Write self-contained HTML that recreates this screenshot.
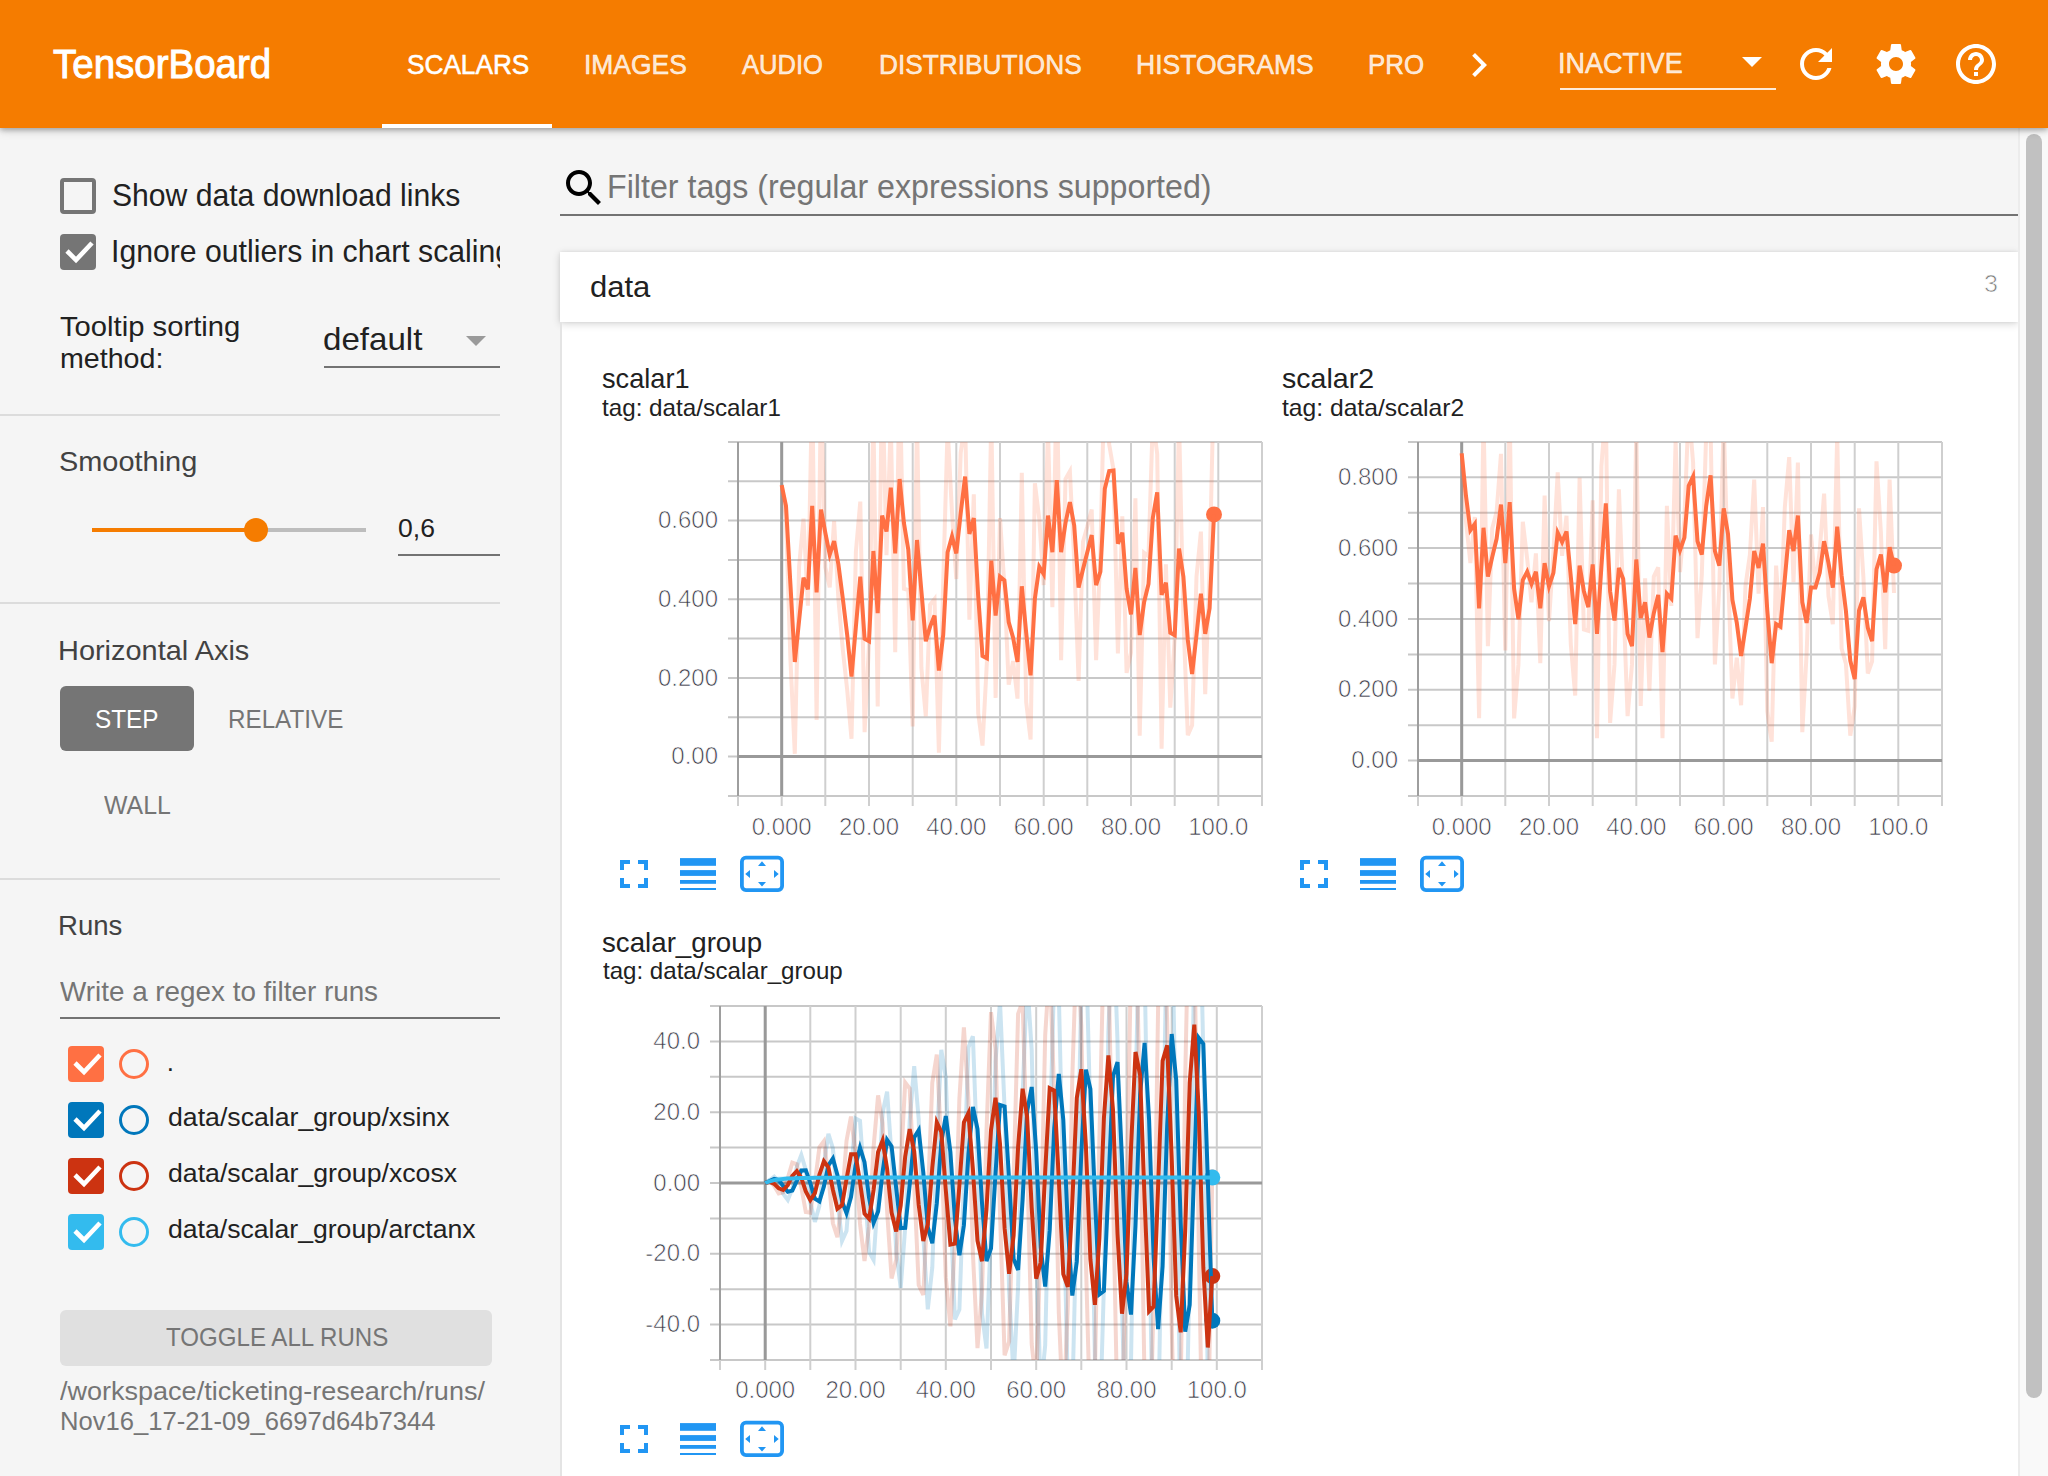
<!DOCTYPE html>
<html><head><meta charset="utf-8"><title>TensorBoard</title>
<style>
html,body{margin:0;padding:0;}
body{width:2048px;height:1476px;overflow:hidden;position:relative;background:#f5f5f5;font-family:"Liberation Sans",sans-serif;}
.t{position:absolute;white-space:nowrap;line-height:1;transform-origin:0 0;}
.abs{position:absolute;}
svg{position:absolute;overflow:visible;}
</style></head><body>
<div class="abs" style="left:0;top:128px;width:560px;height:1348px;background:#f5f5f5"></div>
<div class="abs" style="left:560px;top:322px;width:1458px;height:1200px;background:#fff"></div>
<div class="abs" style="left:560px;top:252px;width:1458px;height:70px;background:#fff;box-shadow:0 2px 8px rgba(0,0,0,0.16),0 0 3px rgba(0,0,0,0.08)"></div>
<div class="abs" style="left:560px;top:322px;width:2px;height:1160px;background:#e4e4e4"></div>
<div class="abs" style="left:2018px;top:128px;width:30px;height:1348px;background:#f9f9f9;border-left:2px solid #ececec;box-sizing:border-box"></div>
<div class="abs" style="left:2026px;top:134px;width:16px;height:1264px;background:#c1c1c1;border-radius:8px"></div>
<div class="abs" style="left:60px;top:178px;width:36px;height:36px;box-sizing:border-box;border:4px solid #757575;border-radius:4px"></div>
<div class="t" style="left:111.59px;top:178.91px;font-size:32px;color:#212121;transform:scaleX(0.9415);">Show data download links</div>
<div class="abs" style="left:60px;top:234px;width:36px;height:36px;background:#757575;border-radius:4px"></div>
<svg style="left:60px;top:234px" width="36" height="36"><polyline points="7,17 16,26 32,9" fill="none" stroke="#fff" stroke-width="4.6"/></svg>
<div class="abs" style="left:0;top:220px;width:500px;height:60px;overflow:hidden"><div class="t" style="left:111.47px;top:14.91px;font-size:32px;color:#212121;transform:scaleX(0.9435);">Ignore outliers in chart scaling</div></div>
<div class="t" style="left:59.98px;top:312.60px;font-size:28px;color:#212121;transform:scaleX(1.0434);">Tooltip sorting</div>
<div class="t" style="left:60.11px;top:344.60px;font-size:28px;color:#212121;transform:scaleX(1.0216);">method:</div>
<div class="t" style="left:322.71px;top:322.91px;font-size:32px;color:#212121;transform:scaleX(1.0343);">default</div>
<svg style="left:466px;top:336px" width="20" height="11"><path d="M0 0 L20 0 L10 10z" fill="#9a9a9a"/></svg>
<div class="abs" style="left:324px;top:366px;width:176px;height:2px;background:#737373"></div>
<div class="abs" style="left:0;top:414px;width:500px;height:2px;background:#dcdcdc"></div>
<div class="t" style="left:58.71px;top:448.30px;font-size:28px;color:#424242;transform:scaleX(1.0325);">Smoothing</div>
<div class="abs" style="left:92px;top:527.5px;width:164px;height:4px;background:#f57c00"></div>
<div class="abs" style="left:256px;top:527.5px;width:110px;height:4px;background:#bdbdbd"></div>
<div class="abs" style="left:244px;top:517.5px;width:24px;height:24px;border-radius:12px;background:#f57c00"></div>
<div class="t" style="left:397.98px;top:515.39px;font-size:26px;color:#212121;transform:scaleX(1.0219);">0,6</div>
<div class="abs" style="left:398px;top:554px;width:102px;height:2px;background:#737373"></div>
<div class="abs" style="left:0;top:602px;width:500px;height:2px;background:#dcdcdc"></div>
<div class="t" style="left:57.68px;top:636.80px;font-size:28px;color:#424242;transform:scaleX(1.0330);">Horizontal Axis</div>
<div class="abs" style="left:60px;top:686px;width:134px;height:65px;background:#757575;border-radius:6px"></div>
<div class="t" style="left:94.83px;top:705.99px;font-size:26px;color:#ffffff;transform:scaleX(0.9349);">STEP</div>
<div class="t" style="left:227.64px;top:705.99px;font-size:26px;color:#757575;transform:scaleX(0.9317);">RELATIVE</div>
<div class="t" style="left:103.70px;top:791.99px;font-size:26px;color:#757575;transform:scaleX(0.9574);">WALL</div>
<div class="abs" style="left:0;top:878px;width:500px;height:2px;background:#dcdcdc"></div>
<div class="t" style="left:57.79px;top:912.30px;font-size:28px;color:#424242;transform:scaleX(0.9839);">Runs</div>
<div class="t" style="left:60.00px;top:978.30px;font-size:28px;color:#757575;transform:scaleX(0.9937);">Write a regex to filter runs</div>
<div class="abs" style="left:60px;top:1017px;width:440px;height:2px;background:#737373"></div>
<div class="abs" style="left:68px;top:1046px;width:36px;height:36px;background:#ff7043;border-radius:4px"></div>
<svg style="left:68px;top:1046px" width="36" height="36"><polyline points="7,17 16,26 32,9" fill="none" stroke="#fff" stroke-width="4.6"/></svg>
<div class="abs" style="left:119px;top:1049px;width:30px;height:30px;box-sizing:border-box;border:3px solid #ff7043;border-radius:50%"></div>
<div class="t" style="left:166.75px;top:1048.99px;font-size:26px;color:#212121;">.</div>
<div class="abs" style="left:68px;top:1102px;width:36px;height:36px;background:#0077bb;border-radius:4px"></div>
<svg style="left:68px;top:1102px" width="36" height="36"><polyline points="7,17 16,26 32,9" fill="none" stroke="#fff" stroke-width="4.6"/></svg>
<div class="abs" style="left:119px;top:1105px;width:30px;height:30px;box-sizing:border-box;border:3px solid #0077bb;border-radius:50%"></div>
<div class="t" style="left:167.57px;top:1103.99px;font-size:26px;color:#212121;transform:scaleX(1.0254);">data/scalar_group/xsinx</div>
<div class="abs" style="left:68px;top:1158px;width:36px;height:36px;background:#cc3311;border-radius:4px"></div>
<svg style="left:68px;top:1158px" width="36" height="36"><polyline points="7,17 16,26 32,9" fill="none" stroke="#fff" stroke-width="4.6"/></svg>
<div class="abs" style="left:119px;top:1161px;width:30px;height:30px;box-sizing:border-box;border:3px solid #cc3311;border-radius:50%"></div>
<div class="t" style="left:167.57px;top:1159.99px;font-size:26px;color:#212121;transform:scaleX(1.0257);">data/scalar_group/xcosx</div>
<div class="abs" style="left:68px;top:1214px;width:36px;height:36px;background:#33bbee;border-radius:4px"></div>
<svg style="left:68px;top:1214px" width="36" height="36"><polyline points="7,17 16,26 32,9" fill="none" stroke="#fff" stroke-width="4.6"/></svg>
<div class="abs" style="left:119px;top:1217px;width:30px;height:30px;box-sizing:border-box;border:3px solid #33bbee;border-radius:50%"></div>
<div class="t" style="left:167.58px;top:1215.99px;font-size:26px;color:#212121;transform:scaleX(1.0234);">data/scalar_group/arctanx</div>
<div class="abs" style="left:60px;top:1310px;width:432px;height:56px;background:#e0e0e0;border-radius:6px"></div>
<div class="t" style="left:165.54px;top:1324.39px;font-size:26px;color:#757575;transform:scaleX(0.9268);">TOGGLE ALL RUNS</div>
<div class="t" style="left:60.00px;top:1377.99px;font-size:26px;color:#757575;transform:scaleX(1.0391);">/workspace/ticketing-research/runs/</div>
<div class="t" style="left:60.33px;top:1407.99px;font-size:26px;color:#757575;transform:scaleX(0.9839);">Nov16_17-21-09_6697d64b7344</div>
<svg style="left:560px;top:164px" width="48" height="48" viewBox="0 0 24 24"><path fill="#000" d="M15.5 14h-.79l-.28-.27C15.41 12.59 16 11.11 16 9.5 16 5.91 13.09 3 9.5 3S3 5.91 3 9.5 5.91 16 9.5 16c1.61 0 3.09-.59 4.23-1.57l.27.28v.79l5 4.99L20.49 19l-4.99-5zm-6 0C7.01 14 5 11.99 5 9.5S7.01 5 9.5 5 14 7.01 14 9.5 11.99 14 9.5 14z"/></svg>
<div class="t" style="left:607.32px;top:170.37px;font-size:33px;color:#757575;transform:scaleX(0.9752);">Filter tags (regular expressions supported)</div>
<div class="abs" style="left:560px;top:214px;width:1458px;height:2px;background:#737373"></div>
<div class="t" style="left:589.67px;top:272.95px;font-size:29px;color:#212121;transform:scaleX(1.0679);">data</div>
<div class="t" style="left:1983.82px;top:271.68px;font-size:24px;color:#7a7a7a;transform:scaleX(1.0435);-webkit-text-stroke:0.7px #fff;">3</div>
<svg style="left:0;top:0" width="2048" height="1476"><style>.al{font-family:"Liberation Sans",sans-serif;font-size:24px;fill:#3c3c48;stroke:#fff;stroke-width:0.7px;}</style>
<line x1="728.0" y1="795.9" x2="1262.0" y2="795.9" stroke="#c8c8c8" stroke-width="2"/>
<line x1="728.0" y1="756.6" x2="1262.0" y2="756.6" stroke="#c8c8c8" stroke-width="2"/>
<line x1="728.0" y1="717.3" x2="1262.0" y2="717.3" stroke="#c8c8c8" stroke-width="2"/>
<line x1="728.0" y1="677.9" x2="1262.0" y2="677.9" stroke="#c8c8c8" stroke-width="2"/>
<line x1="728.0" y1="638.6" x2="1262.0" y2="638.6" stroke="#c8c8c8" stroke-width="2"/>
<line x1="728.0" y1="599.2" x2="1262.0" y2="599.2" stroke="#c8c8c8" stroke-width="2"/>
<line x1="728.0" y1="559.9" x2="1262.0" y2="559.9" stroke="#c8c8c8" stroke-width="2"/>
<line x1="728.0" y1="520.6" x2="1262.0" y2="520.6" stroke="#c8c8c8" stroke-width="2"/>
<line x1="728.0" y1="481.2" x2="1262.0" y2="481.2" stroke="#c8c8c8" stroke-width="2"/>
<line x1="728.0" y1="441.9" x2="1262.0" y2="441.9" stroke="#c8c8c8" stroke-width="2"/>
<line x1="738.0" y1="442.0" x2="738.0" y2="806.0" stroke="#cfcfcf" stroke-width="2"/>
<line x1="781.7" y1="442.0" x2="781.7" y2="806.0" stroke="#cfcfcf" stroke-width="2"/>
<line x1="825.3" y1="442.0" x2="825.3" y2="806.0" stroke="#cfcfcf" stroke-width="2"/>
<line x1="869.0" y1="442.0" x2="869.0" y2="806.0" stroke="#cfcfcf" stroke-width="2"/>
<line x1="912.7" y1="442.0" x2="912.7" y2="806.0" stroke="#cfcfcf" stroke-width="2"/>
<line x1="956.3" y1="442.0" x2="956.3" y2="806.0" stroke="#cfcfcf" stroke-width="2"/>
<line x1="1000.0" y1="442.0" x2="1000.0" y2="806.0" stroke="#cfcfcf" stroke-width="2"/>
<line x1="1043.7" y1="442.0" x2="1043.7" y2="806.0" stroke="#cfcfcf" stroke-width="2"/>
<line x1="1087.3" y1="442.0" x2="1087.3" y2="806.0" stroke="#cfcfcf" stroke-width="2"/>
<line x1="1131.0" y1="442.0" x2="1131.0" y2="806.0" stroke="#cfcfcf" stroke-width="2"/>
<line x1="1174.7" y1="442.0" x2="1174.7" y2="806.0" stroke="#cfcfcf" stroke-width="2"/>
<line x1="1218.3" y1="442.0" x2="1218.3" y2="806.0" stroke="#cfcfcf" stroke-width="2"/>
<line x1="1262.0" y1="442.0" x2="1262.0" y2="806.0" stroke="#cfcfcf" stroke-width="2"/>
<line x1="738.0" y1="442.0" x2="738.0" y2="796.0" stroke="#9e9e9e" stroke-width="2"/>
<line x1="738.0" y1="756.6" x2="1262.0" y2="756.6" stroke="#999" stroke-width="3"/>
<line x1="781.7" y1="442.0" x2="781.7" y2="796.0" stroke="#999" stroke-width="3"/>
<text x="781.7" y="835.0" text-anchor="middle" class="al">0.000</text>
<text x="869.0" y="835.0" text-anchor="middle" class="al">20.00</text>
<text x="956.3" y="835.0" text-anchor="middle" class="al">40.00</text>
<text x="1043.7" y="835.0" text-anchor="middle" class="al">60.00</text>
<text x="1131.0" y="835.0" text-anchor="middle" class="al">80.00</text>
<text x="1218.3" y="835.0" text-anchor="middle" class="al">100.0</text>
<text x="718.0" y="528.2" text-anchor="end" class="al">0.600</text>
<text x="718.0" y="606.8" text-anchor="end" class="al">0.400</text>
<text x="718.0" y="685.5" text-anchor="end" class="al">0.200</text>
<text x="718.0" y="764.2" text-anchor="end" class="al">0.00</text>
<clipPath id="cp1"><rect x="738.0" y="442.0" width="524.0" height="354.0"/></clipPath>
<g clip-path="url(#cp1)">
<polyline points="781.7,485.1 786.0,518.4 790.4,658.8 794.8,753.8 799.1,566.3 803.5,518.7 807.9,605.7 812.2,384.3 816.6,720.0 821.0,386.4 825.3,567.3 829.7,587.3 834.1,521.1 838.4,599.2 842.8,649.6 847.2,690.0 851.5,738.8 855.9,551.6 860.3,501.6 864.6,732.1 869.0,644.8 873.4,415.7 877.7,706.5 882.1,369.2 886.5,555.3 890.8,421.8 895.2,652.1 899.6,367.4 903.9,588.7 908.3,590.1 912.7,726.5 917.0,419.3 921.4,668.0 925.8,716.2 930.1,604.7 934.5,599.1 938.9,752.8 943.2,582.0 947.6,427.9 952.0,512.5 956.3,579.0 960.7,452.9 965.1,421.7 969.4,619.8 973.8,494.2 978.2,713.2 982.5,745.6 986.9,661.9 991.3,414.3 995.6,697.9 1000.0,518.1 1004.4,585.6 1008.7,684.7 1013.1,661.0 1017.5,698.6 1021.8,472.8 1026.2,702.3 1030.6,739.4 1034.9,483.2 1039.3,519.3 1043.7,585.0 1048.0,427.9 1052.4,607.1 1056.8,372.2 1061.1,660.2 1065.5,479.0 1069.9,471.2 1074.2,560.2 1078.6,680.9 1083.0,541.8 1087.3,526.6 1091.7,509.5 1096.1,660.1 1100.4,551.6 1104.8,364.4 1109.2,444.6 1113.5,469.6 1117.9,653.5 1122.3,516.2 1126.6,672.9 1131.0,652.8 1135.4,498.4 1139.7,735.8 1144.1,552.9 1148.5,556.4 1152.8,419.2 1157.2,454.0 1161.6,748.6 1165.9,564.4 1170.3,707.7 1174.7,638.7 1179.0,418.6 1183.4,618.8 1187.8,735.1 1192.1,725.2 1196.5,576.6 1200.9,531.6 1205.2,694.2 1209.6,569.9 1214.0,373.6" fill="none" stroke="#ff7043" stroke-opacity="0.2" stroke-width="4"/>
<circle cx="1214.0" cy="514.4" r="8" fill="#ff7043"/>
<polyline points="781.7,485.1 786.0,505.9 790.4,583.9 794.8,662.0 799.1,620.5 803.5,577.8 807.9,589.3 812.2,505.9 816.6,592.4 821.0,509.5 825.3,532.7 829.7,554.6 834.1,541.2 838.4,564.4 842.8,598.5 847.2,635.1 851.5,676.6 855.9,626.6 860.3,576.6 864.6,638.8 869.0,641.2 873.4,551.0 877.7,613.2 882.1,515.6 886.5,531.5 890.8,487.6 895.2,553.4 899.6,479.0 903.9,522.9 908.3,549.8 912.7,620.5 917.0,540.0 921.4,591.2 925.8,641.2 930.1,626.6 934.5,615.6 938.9,670.5 943.2,635.1 947.6,552.2 952.0,536.3 956.3,553.4 960.7,513.2 965.1,476.6 969.4,533.9 973.8,518.0 978.2,596.1 982.5,655.9 986.9,658.3 991.3,560.7 995.6,615.6 1000.0,576.6 1004.4,580.2 1008.7,622.0 1013.1,637.6 1017.5,662.0 1021.8,586.3 1026.2,632.7 1030.6,675.4 1034.9,598.5 1039.3,566.8 1043.7,574.1 1048.0,515.6 1052.4,552.2 1056.8,480.2 1061.1,552.2 1065.5,522.9 1069.9,502.2 1074.2,525.4 1078.6,587.6 1083.0,569.3 1087.3,552.2 1091.7,535.1 1096.1,585.1 1100.4,571.7 1104.8,488.8 1109.2,471.1 1113.5,470.5 1117.9,543.7 1122.3,532.7 1126.6,588.8 1131.0,614.4 1135.4,568.0 1139.7,635.1 1144.1,602.2 1148.5,583.9 1152.8,518.0 1157.2,492.4 1161.6,594.9 1165.9,582.7 1170.3,632.7 1174.7,635.1 1179.0,548.5 1183.4,576.6 1187.8,640.0 1192.1,674.1 1196.5,635.1 1200.9,593.7 1205.2,633.9 1209.6,608.3 1214.0,514.4" fill="none" stroke="#ff7043" stroke-width="4"/>
</g>
<line x1="1408.0" y1="796.0" x2="1942.0" y2="796.0" stroke="#c8c8c8" stroke-width="2"/>
<line x1="1408.0" y1="760.6" x2="1942.0" y2="760.6" stroke="#c8c8c8" stroke-width="2"/>
<line x1="1408.0" y1="725.2" x2="1942.0" y2="725.2" stroke="#c8c8c8" stroke-width="2"/>
<line x1="1408.0" y1="689.8" x2="1942.0" y2="689.8" stroke="#c8c8c8" stroke-width="2"/>
<line x1="1408.0" y1="654.4" x2="1942.0" y2="654.4" stroke="#c8c8c8" stroke-width="2"/>
<line x1="1408.0" y1="619.0" x2="1942.0" y2="619.0" stroke="#c8c8c8" stroke-width="2"/>
<line x1="1408.0" y1="583.5" x2="1942.0" y2="583.5" stroke="#c8c8c8" stroke-width="2"/>
<line x1="1408.0" y1="548.1" x2="1942.0" y2="548.1" stroke="#c8c8c8" stroke-width="2"/>
<line x1="1408.0" y1="512.7" x2="1942.0" y2="512.7" stroke="#c8c8c8" stroke-width="2"/>
<line x1="1408.0" y1="477.3" x2="1942.0" y2="477.3" stroke="#c8c8c8" stroke-width="2"/>
<line x1="1408.0" y1="441.9" x2="1942.0" y2="441.9" stroke="#c8c8c8" stroke-width="2"/>
<line x1="1418.0" y1="442.0" x2="1418.0" y2="806.0" stroke="#cfcfcf" stroke-width="2"/>
<line x1="1461.7" y1="442.0" x2="1461.7" y2="806.0" stroke="#cfcfcf" stroke-width="2"/>
<line x1="1505.3" y1="442.0" x2="1505.3" y2="806.0" stroke="#cfcfcf" stroke-width="2"/>
<line x1="1549.0" y1="442.0" x2="1549.0" y2="806.0" stroke="#cfcfcf" stroke-width="2"/>
<line x1="1592.7" y1="442.0" x2="1592.7" y2="806.0" stroke="#cfcfcf" stroke-width="2"/>
<line x1="1636.3" y1="442.0" x2="1636.3" y2="806.0" stroke="#cfcfcf" stroke-width="2"/>
<line x1="1680.0" y1="442.0" x2="1680.0" y2="806.0" stroke="#cfcfcf" stroke-width="2"/>
<line x1="1723.7" y1="442.0" x2="1723.7" y2="806.0" stroke="#cfcfcf" stroke-width="2"/>
<line x1="1767.3" y1="442.0" x2="1767.3" y2="806.0" stroke="#cfcfcf" stroke-width="2"/>
<line x1="1811.0" y1="442.0" x2="1811.0" y2="806.0" stroke="#cfcfcf" stroke-width="2"/>
<line x1="1854.7" y1="442.0" x2="1854.7" y2="806.0" stroke="#cfcfcf" stroke-width="2"/>
<line x1="1898.3" y1="442.0" x2="1898.3" y2="806.0" stroke="#cfcfcf" stroke-width="2"/>
<line x1="1942.0" y1="442.0" x2="1942.0" y2="806.0" stroke="#cfcfcf" stroke-width="2"/>
<line x1="1418.0" y1="442.0" x2="1418.0" y2="796.0" stroke="#9e9e9e" stroke-width="2"/>
<line x1="1418.0" y1="760.6" x2="1942.0" y2="760.6" stroke="#999" stroke-width="3"/>
<line x1="1461.7" y1="442.0" x2="1461.7" y2="796.0" stroke="#999" stroke-width="3"/>
<text x="1461.7" y="835.0" text-anchor="middle" class="al">0.000</text>
<text x="1549.0" y="835.0" text-anchor="middle" class="al">20.00</text>
<text x="1636.3" y="835.0" text-anchor="middle" class="al">40.00</text>
<text x="1723.7" y="835.0" text-anchor="middle" class="al">60.00</text>
<text x="1811.0" y="835.0" text-anchor="middle" class="al">80.00</text>
<text x="1898.3" y="835.0" text-anchor="middle" class="al">100.0</text>
<text x="1398.0" y="484.9" text-anchor="end" class="al">0.800</text>
<text x="1398.0" y="555.7" text-anchor="end" class="al">0.600</text>
<text x="1398.0" y="626.6" text-anchor="end" class="al">0.400</text>
<text x="1398.0" y="697.4" text-anchor="end" class="al">0.200</text>
<text x="1398.0" y="768.2" text-anchor="end" class="al">0.00</text>
<clipPath id="cp2"><rect x="1418.0" y="442.0" width="524.0" height="354.0"/></clipPath>
<g clip-path="url(#cp2)">
<polyline points="1461.7,453.4 1466.0,521.7 1470.4,563.0 1474.8,517.0 1479.1,718.2 1483.5,416.5 1487.9,646.3 1492.2,528.6 1496.6,511.8 1501.0,453.9 1505.3,650.4 1509.7,411.1 1514.1,718.4 1518.4,664.9 1522.8,521.8 1527.2,558.9 1531.5,602.2 1535.9,553.4 1540.3,663.2 1544.6,495.5 1549.0,621.1 1553.4,552.8 1557.7,472.3 1562.1,555.9 1566.5,515.7 1570.8,644.3 1575.2,695.5 1579.6,477.8 1583.9,629.6 1588.3,630.9 1592.7,500.4 1597.0,738.2 1601.4,466.2 1605.8,408.3 1610.1,722.9 1614.5,664.4 1618.9,489.4 1623.2,595.5 1627.6,716.2 1632.0,664.4 1636.3,429.6 1640.7,705.9 1645.1,578.4 1649.4,690.6 1653.8,576.6 1658.2,567.4 1662.5,738.2 1666.9,505.9 1671.3,605.9 1675.6,441.2 1680.0,572.2 1684.4,518.5 1688.7,408.3 1693.1,462.7 1697.5,638.2 1701.8,574.8 1706.2,432.7 1710.6,429.6 1714.9,664.4 1719.3,587.6 1723.7,422.3 1728.0,572.3 1732.4,698.5 1736.8,657.7 1741.1,705.2 1745.5,585.7 1749.9,554.6 1754.2,479.6 1758.6,593.7 1763.0,507.1 1767.3,711.3 1771.7,741.8 1776.1,565.6 1780.4,630.2 1784.8,507.7 1789.2,457.1 1793.5,582.1 1797.9,462.6 1802.3,732.1 1806.6,654.0 1811.0,534.5 1815.4,587.6 1819.7,551.0 1824.1,493.7 1828.5,596.1 1832.8,624.1 1837.2,435.1 1841.6,648.5 1845.9,663.8 1850.3,735.7 1854.7,706.5 1859.0,508.3 1863.4,577.2 1867.8,673.5 1872.1,661.3 1876.5,461.3 1880.9,532.7 1885.2,649.1 1889.6,479.6 1894.0,593.0" fill="none" stroke="#ff7043" stroke-opacity="0.2" stroke-width="4"/>
<circle cx="1894.0" cy="565.6" r="8" fill="#ff7043"/>
<polyline points="1461.7,453.4 1466.0,496.1 1470.4,530.2 1474.8,524.1 1479.1,608.3 1483.5,527.8 1487.9,576.6 1492.2,557.1 1496.6,538.8 1501.0,504.6 1505.3,563.2 1509.7,502.2 1514.1,588.8 1518.4,619.3 1522.8,580.2 1527.2,571.7 1531.5,583.9 1535.9,571.7 1540.3,608.3 1544.6,563.2 1549.0,586.3 1553.4,572.9 1557.7,532.7 1562.1,542.0 1566.5,531.5 1570.8,576.6 1575.2,624.1 1579.6,565.6 1583.9,591.2 1588.3,607.1 1592.7,564.4 1597.0,633.9 1601.4,566.8 1605.8,503.4 1610.1,591.2 1614.5,620.5 1618.9,568.0 1623.2,579.0 1627.6,633.9 1632.0,646.1 1636.3,559.5 1640.7,618.0 1645.1,602.2 1649.4,637.6 1653.8,613.2 1658.2,594.9 1662.5,652.2 1666.9,593.7 1671.3,598.5 1675.6,535.6 1680.0,550.2 1684.4,537.6 1688.7,485.9 1693.1,476.6 1697.5,541.2 1701.8,554.6 1706.2,505.9 1710.6,475.4 1714.9,551.0 1719.3,565.6 1723.7,508.3 1728.0,533.9 1732.4,599.8 1736.8,622.9 1741.1,655.9 1745.5,627.8 1749.9,598.5 1754.2,551.0 1758.6,568.0 1763.0,543.7 1767.3,610.7 1771.7,663.2 1776.1,624.1 1780.4,626.6 1784.8,579.0 1789.2,530.2 1793.5,551.0 1797.9,515.6 1802.3,602.2 1806.6,622.9 1811.0,587.6 1815.4,587.6 1819.7,572.9 1824.1,541.2 1828.5,563.2 1832.8,587.6 1837.2,526.6 1841.6,575.4 1845.9,610.7 1850.3,660.7 1854.7,679.0 1859.0,610.7 1863.4,597.3 1867.8,627.8 1872.1,641.2 1876.5,569.3 1880.9,554.6 1885.2,592.4 1889.6,547.3 1894.0,565.6" fill="none" stroke="#ff7043" stroke-width="4"/>
</g>
<line x1="710.0" y1="1360.0" x2="1262.0" y2="1360.0" stroke="#c8c8c8" stroke-width="2"/>
<line x1="710.0" y1="1324.6" x2="1262.0" y2="1324.6" stroke="#c8c8c8" stroke-width="2"/>
<line x1="710.0" y1="1289.2" x2="1262.0" y2="1289.2" stroke="#c8c8c8" stroke-width="2"/>
<line x1="710.0" y1="1253.8" x2="1262.0" y2="1253.8" stroke="#c8c8c8" stroke-width="2"/>
<line x1="710.0" y1="1218.4" x2="1262.0" y2="1218.4" stroke="#c8c8c8" stroke-width="2"/>
<line x1="710.0" y1="1183.0" x2="1262.0" y2="1183.0" stroke="#c8c8c8" stroke-width="2"/>
<line x1="710.0" y1="1147.6" x2="1262.0" y2="1147.6" stroke="#c8c8c8" stroke-width="2"/>
<line x1="710.0" y1="1112.2" x2="1262.0" y2="1112.2" stroke="#c8c8c8" stroke-width="2"/>
<line x1="710.0" y1="1076.8" x2="1262.0" y2="1076.8" stroke="#c8c8c8" stroke-width="2"/>
<line x1="710.0" y1="1041.4" x2="1262.0" y2="1041.4" stroke="#c8c8c8" stroke-width="2"/>
<line x1="710.0" y1="1006.0" x2="1262.0" y2="1006.0" stroke="#c8c8c8" stroke-width="2"/>
<line x1="720.0" y1="1006.0" x2="720.0" y2="1370.0" stroke="#cfcfcf" stroke-width="2"/>
<line x1="765.2" y1="1006.0" x2="765.2" y2="1370.0" stroke="#cfcfcf" stroke-width="2"/>
<line x1="810.3" y1="1006.0" x2="810.3" y2="1370.0" stroke="#cfcfcf" stroke-width="2"/>
<line x1="855.5" y1="1006.0" x2="855.5" y2="1370.0" stroke="#cfcfcf" stroke-width="2"/>
<line x1="900.7" y1="1006.0" x2="900.7" y2="1370.0" stroke="#cfcfcf" stroke-width="2"/>
<line x1="945.8" y1="1006.0" x2="945.8" y2="1370.0" stroke="#cfcfcf" stroke-width="2"/>
<line x1="991.0" y1="1006.0" x2="991.0" y2="1370.0" stroke="#cfcfcf" stroke-width="2"/>
<line x1="1036.2" y1="1006.0" x2="1036.2" y2="1370.0" stroke="#cfcfcf" stroke-width="2"/>
<line x1="1081.3" y1="1006.0" x2="1081.3" y2="1370.0" stroke="#cfcfcf" stroke-width="2"/>
<line x1="1126.5" y1="1006.0" x2="1126.5" y2="1370.0" stroke="#cfcfcf" stroke-width="2"/>
<line x1="1171.7" y1="1006.0" x2="1171.7" y2="1370.0" stroke="#cfcfcf" stroke-width="2"/>
<line x1="1216.8" y1="1006.0" x2="1216.8" y2="1370.0" stroke="#cfcfcf" stroke-width="2"/>
<line x1="1262.0" y1="1006.0" x2="1262.0" y2="1370.0" stroke="#cfcfcf" stroke-width="2"/>
<line x1="720.0" y1="1006.0" x2="720.0" y2="1360.0" stroke="#9e9e9e" stroke-width="2"/>
<line x1="720.0" y1="1183.0" x2="1262.0" y2="1183.0" stroke="#999" stroke-width="3"/>
<line x1="765.2" y1="1006.0" x2="765.2" y2="1360.0" stroke="#999" stroke-width="3"/>
<text x="765.2" y="1398.3" text-anchor="middle" class="al">0.000</text>
<text x="855.5" y="1398.3" text-anchor="middle" class="al">20.00</text>
<text x="945.8" y="1398.3" text-anchor="middle" class="al">40.00</text>
<text x="1036.2" y="1398.3" text-anchor="middle" class="al">60.00</text>
<text x="1126.5" y="1398.3" text-anchor="middle" class="al">80.00</text>
<text x="1216.8" y="1398.3" text-anchor="middle" class="al">100.0</text>
<text x="700.0" y="1049.0" text-anchor="end" class="al">40.0</text>
<text x="700.0" y="1119.8" text-anchor="end" class="al">20.0</text>
<text x="700.0" y="1190.6" text-anchor="end" class="al">0.00</text>
<text x="700.0" y="1261.4" text-anchor="end" class="al">-20.0</text>
<text x="700.0" y="1332.2" text-anchor="end" class="al">-40.0</text>
<clipPath id="cp3"><rect x="720.0" y="1006.0" width="542.0" height="354.0"/></clipPath>
<g clip-path="url(#cp3)">
<polyline points="765.2,1183.0 769.7,1180.0 774.2,1176.6 778.7,1181.5 783.2,1193.7 787.8,1200.0 792.3,1188.9 796.8,1166.7 801.3,1155.0 805.8,1169.9 810.3,1202.3 814.9,1221.9 819.4,1205.8 823.9,1163.7 828.4,1133.9 832.9,1148.5 837.4,1199.3 842.0,1240.9 846.5,1230.9 851.0,1172.9 855.5,1118.4 860.0,1120.8 864.5,1183.7 869.1,1251.9 873.6,1259.9 878.1,1194.7 882.6,1112.8 887.1,1091.6 891.6,1156.1 896.2,1251.1 900.7,1287.9 905.2,1227.3 909.7,1120.5 914.2,1066.2 918.7,1119.3 923.3,1236.1 927.8,1309.4 932.3,1267.3 936.8,1143.1 941.3,1049.9 945.8,1077.5 950.4,1206.0 954.9,1319.3 959.4,1309.6 963.9,1180.2 968.4,1047.5 972.9,1036.2 977.5,1162.4 982.0,1313.5 986.5,1348.4 991.0,1229.4 995.5,1062.0 1000.0,1001.4 1004.6,1108.7 1009.1,1289.8 1013.6,1377.7 1018.1,1286.4 1022.6,1095.0 1027.1,979.1 1031.7,1050.0 1036.2,1247.7 1040.7,1391.6 1045.2,1345.2 1049.7,1145.7 1054.2,974.6 1058.8,992.7 1063.3,1189.2 1067.8,1385.9 1072.3,1399.1 1076.8,1211.0 1081.3,991.2 1085.9,944.0 1090.4,1118.3 1094.9,1357.9 1099.4,1441.1 1103.9,1286.0 1108.4,1030.7 1113.0,910.6 1117.5,1041.1 1122.0,1307.2 1126.5,1464.5 1131.0,1363.6 1135.5,1092.1 1140.1,898.5 1144.6,965.0 1149.1,1236.0 1153.6,1464.1 1158.1,1436.1 1162.6,1172.0 1167.2,912.0 1171.7,898.2 1176.2,1148.9 1180.7,1436.9 1185.2,1495.2 1189.7,1264.6 1194.3,953.2 1198.8,848.7 1203.3,1052.7 1207.8,1381.9 1212.3,1533.2" fill="none" stroke="#0077bb" stroke-opacity="0.2" stroke-width="4"/>
<polyline points="765.2,1183.0 769.7,1181.1 774.2,1185.9 778.7,1193.5 783.2,1192.3 787.8,1178.0 792.3,1162.6 796.8,1164.3 801.3,1187.1 805.8,1212.0 810.3,1212.7 814.9,1182.8 819.4,1147.2 823.9,1141.2 828.4,1176.2 832.9,1223.3 837.4,1237.2 842.0,1199.6 846.5,1140.9 851.0,1116.5 855.5,1154.1 860.0,1223.7 864.5,1260.9 869.1,1226.4 873.6,1147.0 878.1,1095.3 882.6,1123.5 887.1,1210.9 891.6,1278.4 896.2,1259.8 900.7,1166.6 905.2,1082.6 909.7,1088.5 914.2,1184.6 918.7,1285.1 923.3,1295.0 927.8,1199.3 932.3,1082.7 936.8,1054.5 941.3,1146.2 945.8,1277.4 950.4,1326.3 954.9,1242.5 959.4,1098.5 963.9,1027.3 968.4,1099.3 972.9,1253.4 977.5,1348.1 982.0,1291.8 986.5,1130.9 991.0,1012.2 995.5,1049.0 1000.0,1213.0 1004.6,1355.3 1009.1,1341.5 1013.6,1178.7 1018.1,1013.9 1022.6,1001.4 1027.1,1158.5 1031.7,1344.0 1036.2,1385.3 1040.7,1238.7 1045.2,1035.2 1049.7,963.1 1054.2,1094.2 1058.8,1312.4 1063.3,1416.6 1067.8,1305.8 1072.3,1077.0 1076.8,940.4 1081.3,1026.1 1085.9,1260.7 1090.4,1429.5 1094.9,1373.2 1099.4,1138.0 1103.9,938.3 1108.4,961.2 1113.0,1191.4 1117.5,1419.9 1122.0,1433.6 1126.5,1214.3 1131.0,960.3 1135.5,907.3 1140.1,1109.7 1144.6,1385.2 1149.1,1479.2 1153.6,1299.8 1158.1,1007.5 1162.6,871.7 1167.2,1022.3 1171.7,1325.8 1176.2,1503.3 1180.7,1387.0 1185.2,1078.5 1189.7,860.4 1194.3,937.4 1198.8,1244.3 1203.3,1500.7 1207.8,1467.2 1212.3,1169.0" fill="none" stroke="#cc3311" stroke-opacity="0.2" stroke-width="4"/>
<polyline points="765.2,1183.0 769.7,1180.2 774.2,1179.1 778.7,1178.6 783.2,1178.3 787.8,1178.1 792.3,1178.0 796.8,1177.9 801.3,1177.9 805.8,1177.8 810.3,1177.8 814.9,1177.8 819.4,1177.7 823.9,1177.7 828.4,1177.7 832.9,1177.7 837.4,1177.7 842.0,1177.6 846.5,1177.6 851.0,1177.6 855.5,1177.6 860.0,1177.6 864.5,1177.6 869.1,1177.6 873.6,1177.6 878.1,1177.6 882.6,1177.6 887.1,1177.6 891.6,1177.6 896.2,1177.6 900.7,1177.6 905.2,1177.6 909.7,1177.5 914.2,1177.5 918.7,1177.5 923.3,1177.5 927.8,1177.5 932.3,1177.5 936.8,1177.5 941.3,1177.5 945.8,1177.5 950.4,1177.5 954.9,1177.5 959.4,1177.5 963.9,1177.5 968.4,1177.5 972.9,1177.5 977.5,1177.5 982.0,1177.5 986.5,1177.5 991.0,1177.5 995.5,1177.5 1000.0,1177.5 1004.6,1177.5 1009.1,1177.5 1013.6,1177.5 1018.1,1177.5 1022.6,1177.5 1027.1,1177.5 1031.7,1177.5 1036.2,1177.5 1040.7,1177.5 1045.2,1177.5 1049.7,1177.5 1054.2,1177.5 1058.8,1177.5 1063.3,1177.5 1067.8,1177.5 1072.3,1177.5 1076.8,1177.5 1081.3,1177.5 1085.9,1177.5 1090.4,1177.5 1094.9,1177.5 1099.4,1177.5 1103.9,1177.5 1108.4,1177.5 1113.0,1177.5 1117.5,1177.5 1122.0,1177.5 1126.5,1177.5 1131.0,1177.5 1135.5,1177.5 1140.1,1177.5 1144.6,1177.5 1149.1,1177.5 1153.6,1177.5 1158.1,1177.5 1162.6,1177.5 1167.2,1177.5 1171.7,1177.5 1176.2,1177.5 1180.7,1177.5 1185.2,1177.5 1189.7,1177.5 1194.3,1177.5 1198.8,1177.5 1203.3,1177.5 1207.8,1177.5 1212.3,1177.5" fill="none" stroke="#33bbee" stroke-opacity="0.2" stroke-width="4"/>
</g>
<circle cx="1212.3" cy="1320.7" r="8" fill="#0077bb"/>
<circle cx="1212.3" cy="1276.1" r="8" fill="#cc3311"/>
<circle cx="1212.3" cy="1177.5" r="8" fill="#33bbee"/>
<g clip-path="url(#cp3)">
<polyline points="765.2,1183.0 769.7,1181.1 774.2,1178.8 778.7,1180.0 783.2,1186.0 787.8,1191.8 792.3,1190.6 796.8,1180.9 801.3,1170.4 805.8,1170.2 810.3,1183.1 814.9,1198.7 819.4,1201.5 823.9,1186.4 828.4,1165.4 832.9,1158.6 837.4,1174.9 842.0,1201.3 846.5,1213.1 851.0,1197.0 855.5,1165.6 860.0,1147.7 864.5,1162.1 869.1,1198.0 873.6,1222.8 878.1,1211.6 882.6,1172.1 887.1,1139.9 891.6,1146.4 896.2,1188.3 900.7,1228.1 905.2,1227.8 909.7,1184.9 914.2,1137.4 918.7,1130.2 923.3,1172.5 927.8,1227.3 932.3,1243.3 936.8,1203.2 941.3,1141.9 945.8,1116.1 950.4,1152.1 954.9,1219.0 959.4,1255.2 963.9,1225.2 968.4,1154.1 972.9,1106.9 977.5,1129.1 982.0,1202.9 986.5,1261.1 991.0,1248.4 995.5,1173.9 1000.0,1104.9 1004.6,1106.4 1009.1,1179.8 1013.6,1258.9 1018.1,1269.9 1022.6,1199.9 1027.1,1111.6 1031.7,1087.0 1036.2,1151.3 1040.7,1247.4 1045.2,1286.5 1049.7,1230.2 1054.2,1127.9 1058.8,1073.9 1063.3,1120.0 1067.8,1226.4 1072.3,1295.5 1076.8,1261.7 1081.3,1153.5 1085.9,1069.7 1090.4,1089.1 1094.9,1196.6 1099.4,1294.4 1103.9,1291.0 1108.4,1186.9 1113.0,1076.4 1117.5,1062.2 1122.0,1160.2 1126.5,1281.9 1131.0,1314.6 1135.5,1225.6 1140.1,1094.7 1144.6,1042.8 1149.1,1120.1 1153.6,1257.7 1158.1,1329.1 1162.6,1266.2 1167.2,1124.5 1171.7,1034.0 1176.2,1079.9 1180.7,1222.7 1185.2,1331.7 1189.7,1304.9 1194.3,1164.2 1198.8,1038.0 1203.3,1043.9 1207.8,1179.1 1212.3,1320.7" fill="none" stroke="#0077bb" stroke-width="4"/>
<polyline points="765.2,1183.0 769.7,1181.8 774.2,1183.9 778.7,1188.3 783.2,1190.0 787.8,1185.0 792.3,1175.8 796.8,1171.1 801.3,1177.6 805.8,1191.4 810.3,1200.0 814.9,1193.1 819.4,1174.7 823.9,1161.3 828.4,1167.3 832.9,1189.7 837.4,1208.7 842.0,1205.1 846.5,1179.4 851.0,1154.2 855.5,1154.2 860.0,1182.0 864.5,1213.6 869.1,1218.7 873.6,1190.0 878.1,1152.1 882.6,1140.6 887.1,1168.8 891.6,1212.6 896.2,1231.5 900.7,1205.5 905.2,1156.4 909.7,1129.2 914.2,1151.4 918.7,1204.9 923.3,1240.9 927.8,1224.3 932.3,1167.7 936.8,1122.4 941.3,1131.9 945.8,1190.1 950.4,1244.6 954.9,1243.7 959.4,1185.6 963.9,1122.3 968.4,1113.1 972.9,1169.2 977.5,1240.8 982.0,1261.2 986.5,1209.0 991.0,1130.3 995.5,1097.8 1000.0,1143.9 1004.6,1228.4 1009.1,1273.7 1013.6,1235.7 1018.1,1147.0 1022.6,1088.7 1027.1,1116.7 1031.7,1207.6 1036.2,1278.7 1040.7,1262.7 1045.2,1171.7 1049.7,1088.3 1054.2,1090.6 1058.8,1179.4 1063.3,1274.2 1067.8,1286.9 1072.3,1202.9 1076.8,1097.9 1081.3,1069.2 1085.9,1145.8 1090.4,1259.3 1094.9,1304.9 1099.4,1238.1 1103.9,1118.2 1108.4,1055.4 1113.0,1109.8 1117.5,1233.8 1122.0,1313.7 1126.5,1273.9 1131.0,1148.5 1135.5,1052.0 1140.1,1075.1 1144.6,1199.1 1149.1,1311.2 1153.6,1306.6 1158.1,1187.0 1162.6,1060.9 1167.2,1045.4 1171.7,1157.6 1176.2,1295.9 1180.7,1332.3 1185.2,1230.8 1189.7,1082.6 1194.3,1024.6 1198.8,1112.5 1203.3,1267.7 1207.8,1347.5 1212.3,1276.1" fill="none" stroke="#cc3311" stroke-width="4"/>
<polyline points="765.2,1183.0 769.7,1181.3 774.2,1180.1 778.7,1179.4 783.2,1178.9 787.8,1178.6 792.3,1178.4 796.8,1178.2 801.3,1178.1 805.8,1178.0 810.3,1177.9 814.9,1177.8 819.4,1177.8 823.9,1177.8 828.4,1177.7 832.9,1177.7 837.4,1177.7 842.0,1177.7 846.5,1177.7 851.0,1177.6 855.5,1177.6 860.0,1177.6 864.5,1177.6 869.1,1177.6 873.6,1177.6 878.1,1177.6 882.6,1177.6 887.1,1177.6 891.6,1177.6 896.2,1177.6 900.7,1177.6 905.2,1177.6 909.7,1177.6 914.2,1177.6 918.7,1177.5 923.3,1177.5 927.8,1177.5 932.3,1177.5 936.8,1177.5 941.3,1177.5 945.8,1177.5 950.4,1177.5 954.9,1177.5 959.4,1177.5 963.9,1177.5 968.4,1177.5 972.9,1177.5 977.5,1177.5 982.0,1177.5 986.5,1177.5 991.0,1177.5 995.5,1177.5 1000.0,1177.5 1004.6,1177.5 1009.1,1177.5 1013.6,1177.5 1018.1,1177.5 1022.6,1177.5 1027.1,1177.5 1031.7,1177.5 1036.2,1177.5 1040.7,1177.5 1045.2,1177.5 1049.7,1177.5 1054.2,1177.5 1058.8,1177.5 1063.3,1177.5 1067.8,1177.5 1072.3,1177.5 1076.8,1177.5 1081.3,1177.5 1085.9,1177.5 1090.4,1177.5 1094.9,1177.5 1099.4,1177.5 1103.9,1177.5 1108.4,1177.5 1113.0,1177.5 1117.5,1177.5 1122.0,1177.5 1126.5,1177.5 1131.0,1177.5 1135.5,1177.5 1140.1,1177.5 1144.6,1177.5 1149.1,1177.5 1153.6,1177.5 1158.1,1177.5 1162.6,1177.5 1167.2,1177.5 1171.7,1177.5 1176.2,1177.5 1180.7,1177.5 1185.2,1177.5 1189.7,1177.5 1194.3,1177.5 1198.8,1177.5 1203.3,1177.5 1207.8,1177.5 1212.3,1177.5" fill="none" stroke="#33bbee" stroke-width="4"/>
</g>
<path transform="translate(610,850) scale(2)" fill="#2196f3" d="M7 14H5v5h5v-2H7v-3zm-2-4h2V7h3V5H5v5zm12 7h-3v2h5v-5h-2v3zM14 5v2h3v3h2V5h-5z"/>
<rect x="680" y="858.1" width="36" height="7.7" fill="#2196f3"/>
<rect x="680" y="870.1" width="36" height="5.8" fill="#2196f3"/>
<rect x="680" y="880" width="36" height="3.8" fill="#2196f3"/>
<rect x="680" y="888" width="36" height="2" fill="#2196f3"/>
<rect x="741.9" y="857.7" width="40.2" height="32.4" rx="4" fill="none" stroke="#2196f3" stroke-width="3.8"/>
<path d="M758.0 866.0 L766.0 866.0 L762.0 861.3zM758.0 882.0 L766.0 882.0 L762.0 886.6zM750.0 870.0 L750.0 878.0 L745.2 874.0zM774.0 870.0 L774.0 878.0 L778.7 874.0z" fill="#2196f3"/>
<path transform="translate(1290,850) scale(2)" fill="#2196f3" d="M7 14H5v5h5v-2H7v-3zm-2-4h2V7h3V5H5v5zm12 7h-3v2h5v-5h-2v3zM14 5v2h3v3h2V5h-5z"/>
<rect x="1360" y="858.1" width="36" height="7.7" fill="#2196f3"/>
<rect x="1360" y="870.1" width="36" height="5.8" fill="#2196f3"/>
<rect x="1360" y="880" width="36" height="3.8" fill="#2196f3"/>
<rect x="1360" y="888" width="36" height="2" fill="#2196f3"/>
<rect x="1421.9" y="857.7" width="40.2" height="32.4" rx="4" fill="none" stroke="#2196f3" stroke-width="3.8"/>
<path d="M1438.0 866.0 L1446.0 866.0 L1442.0 861.3zM1438.0 882.0 L1446.0 882.0 L1442.0 886.6zM1430.0 870.0 L1430.0 878.0 L1425.2 874.0zM1454.0 870.0 L1454.0 878.0 L1458.7 874.0z" fill="#2196f3"/>
<path transform="translate(610,1415) scale(2)" fill="#2196f3" d="M7 14H5v5h5v-2H7v-3zm-2-4h2V7h3V5H5v5zm12 7h-3v2h5v-5h-2v3zM14 5v2h3v3h2V5h-5z"/>
<rect x="680" y="1423.1" width="36" height="7.7" fill="#2196f3"/>
<rect x="680" y="1435.1" width="36" height="5.8" fill="#2196f3"/>
<rect x="680" y="1445" width="36" height="3.8" fill="#2196f3"/>
<rect x="680" y="1453" width="36" height="2" fill="#2196f3"/>
<rect x="741.9" y="1422.7" width="40.2" height="32.4" rx="4" fill="none" stroke="#2196f3" stroke-width="3.8"/>
<path d="M758.0 1431.0 L766.0 1431.0 L762.0 1426.3zM758.0 1447.0 L766.0 1447.0 L762.0 1451.6zM750.0 1435.0 L750.0 1443.0 L745.2 1439.0zM774.0 1435.0 L774.0 1443.0 L778.7 1439.0z" fill="#2196f3"/>
</svg><div class="t" style="left:602.27px;top:365.30px;font-size:28px;color:#212121;transform:scaleX(0.9700);">scalar1</div>
<div class="t" style="left:602.05px;top:395.68px;font-size:24px;color:#212121;transform:scaleX(1.0080);">tag: data/scalar1</div>
<div class="t" style="left:1282.24px;top:365.30px;font-size:28px;color:#212121;transform:scaleX(1.0198);">scalar2</div>
<div class="t" style="left:1282.04px;top:395.68px;font-size:24px;color:#212121;transform:scaleX(1.0267);">tag: data/scalar2</div>
<div class="t" style="left:602.46px;top:929.30px;font-size:28px;color:#212121;transform:scaleX(0.9887);">scalar_group</div>
<div class="t" style="left:602.75px;top:959.18px;font-size:24px;color:#212121;transform:scaleX(1.0036);">tag: data/scalar_group</div>
<div class="abs" style="left:0;top:0;width:2048px;height:128px;background:#f57c00;box-shadow:0 2px 5px rgba(0,0,0,0.26),0 2px 10px rgba(0,0,0,0.16)"></div>
<div class="t" style="left:52.78px;top:44.14px;font-size:40px;color:#ffffff;transform:scaleX(0.9620);-webkit-text-stroke:1px #fff;">TensorBoard</div>
<div class="t" style="left:406.73px;top:51.30px;font-size:28px;color:#ffffff;transform:scaleX(0.9357);-webkit-text-stroke:0.6px #ffffff;">SCALARS</div>
<div class="t" style="left:583.94px;top:51.30px;font-size:28px;color:rgba(255,255,255,0.82);transform:scaleX(0.9444);-webkit-text-stroke:0.6px rgba(255,255,255,0.82);">IMAGES</div>
<div class="t" style="left:742.30px;top:51.30px;font-size:28px;color:rgba(255,255,255,0.82);transform:scaleX(0.9131);-webkit-text-stroke:0.6px rgba(255,255,255,0.82);">AUDIO</div>
<div class="t" style="left:878.69px;top:51.30px;font-size:28px;color:rgba(255,255,255,0.82);transform:scaleX(0.9373);-webkit-text-stroke:0.6px rgba(255,255,255,0.82);">DISTRIBUTIONS</div>
<div class="t" style="left:1135.77px;top:51.30px;font-size:28px;color:rgba(255,255,255,0.82);transform:scaleX(0.9465);-webkit-text-stroke:0.6px rgba(255,255,255,0.82);">HISTOGRAMS</div>
<div class="abs" style="left:1300px;top:30px;width:124px;height:70px;overflow:hidden"><div class="t" style="left:68.12px;top:21.30px;font-size:28px;color:rgba(255,255,255,0.82);transform:scaleX(0.9250);-webkit-text-stroke:0.6px rgba(255,255,255,0.82);">PROJECTOR</div></div>
<div class="abs" style="left:382px;top:124px;width:170px;height:4px;background:#fff"></div>
<svg style="left:1455px;top:41px" width="48" height="48" viewBox="0 0 24 24"><path fill="#fff" d="M10 6L8.59 7.41 13.17 12l-4.58 4.59L10 18l6-6z"/></svg>
<div class="t" style="left:1557.97px;top:49.45px;font-size:29px;color:rgba(255,255,255,0.82);transform:scaleX(0.9321);-webkit-text-stroke:0.6px rgba(255,255,255,0.82);">INACTIVE</div>
<svg style="left:1728px;top:37px" width="48" height="48" viewBox="0 0 24 24"><path fill="#fff" d="M7 10l5 5 5-5z"/></svg>
<div class="abs" style="left:1560px;top:88px;width:216px;height:2px;background:rgba(255,255,255,0.85)"></div>
<svg style="left:1792px;top:40px" width="48" height="48" viewBox="0 0 24 24"><path fill="#fff" d="M17.65 6.35C16.2 4.9 14.21 4 12 4c-4.42 0-7.99 3.58-7.99 8s3.57 8 7.99 8c3.73 0 6.84-2.55 7.73-6h-2.08c-.82 2.33-3.04 4-5.65 4-3.31 0-6-2.69-6-6s2.69-6 6-6c1.66 0 3.14.69 4.22 1.78L13 11h7V4l-2.35 2.35z"/></svg>
<svg style="left:1872px;top:40px" width="48" height="48" viewBox="0 0 24 24"><path fill="#fff" d="M19.43 12.98c.04-.32.07-.64.07-.98s-.03-.66-.07-.98l2.11-1.65c.19-.15.24-.42.12-.64l-2-3.460c-.12-.22-.39-.3-.61-.22l-2.49 1c-.52-.4-1.08-.73-1.69-.98l-.38-2.65C14.46 2.18 14.25 2 14 2h-4c-.25 0-.46.18-.49.42l-.38 2.65c-.61.25-1.17.59-1.69.98l-2.49-1c-.23-.09-.49 0-.61.22l-2 3.46c-.13.22-.07.49.12.64l2.11 1.65c-.04.32-.07.65-.07.98s.03.66.07.98l-2.11 1.65c-.19.15-.24.42-.12.64l2 3.46c.12.22.39.3.61.22l2.49-1c.52.4 1.08.73 1.69.98l.38 2.65c.03.24.24.42.49.42h4c.25 0 .46-.18.49-.42l.38-2.65c.61-.25 1.17-.59 1.69-.98l2.49 1c.23.09.49 0 .61-.22l2-3.46c.12-.22.07-.49-.12-.64l-2.11-1.65zM12 15.5c-1.93 0-3.5-1.57-3.5-3.5s1.57-3.5 3.5-3.5 3.5 1.57 3.5 3.5-1.57 3.5-3.5 3.5z"/></svg>
<svg style="left:1952px;top:40px" width="48" height="48" viewBox="0 0 24 24"><path fill="#fff" d="M11 18h2v-2h-2v2zm1-16C6.48 2 2 6.48 2 12s4.480 10 10 10 10-4.48 10-10S17.52 2 12 2zm0 18c-4.41 0-8-3.59-8-8s3.59-8 8-8 8 3.590 8 8-3.59 8-8 8zm0-14c-2.21 0-4 1.79-4 4h2c0-1.1.9-2 2-2s2 .9 2 2c0 2-3 1.75-3 5h2c0-2.25 3-2.5 3-5 0-2.21-1.79-4-4-4z"/></svg>
</body></html>
